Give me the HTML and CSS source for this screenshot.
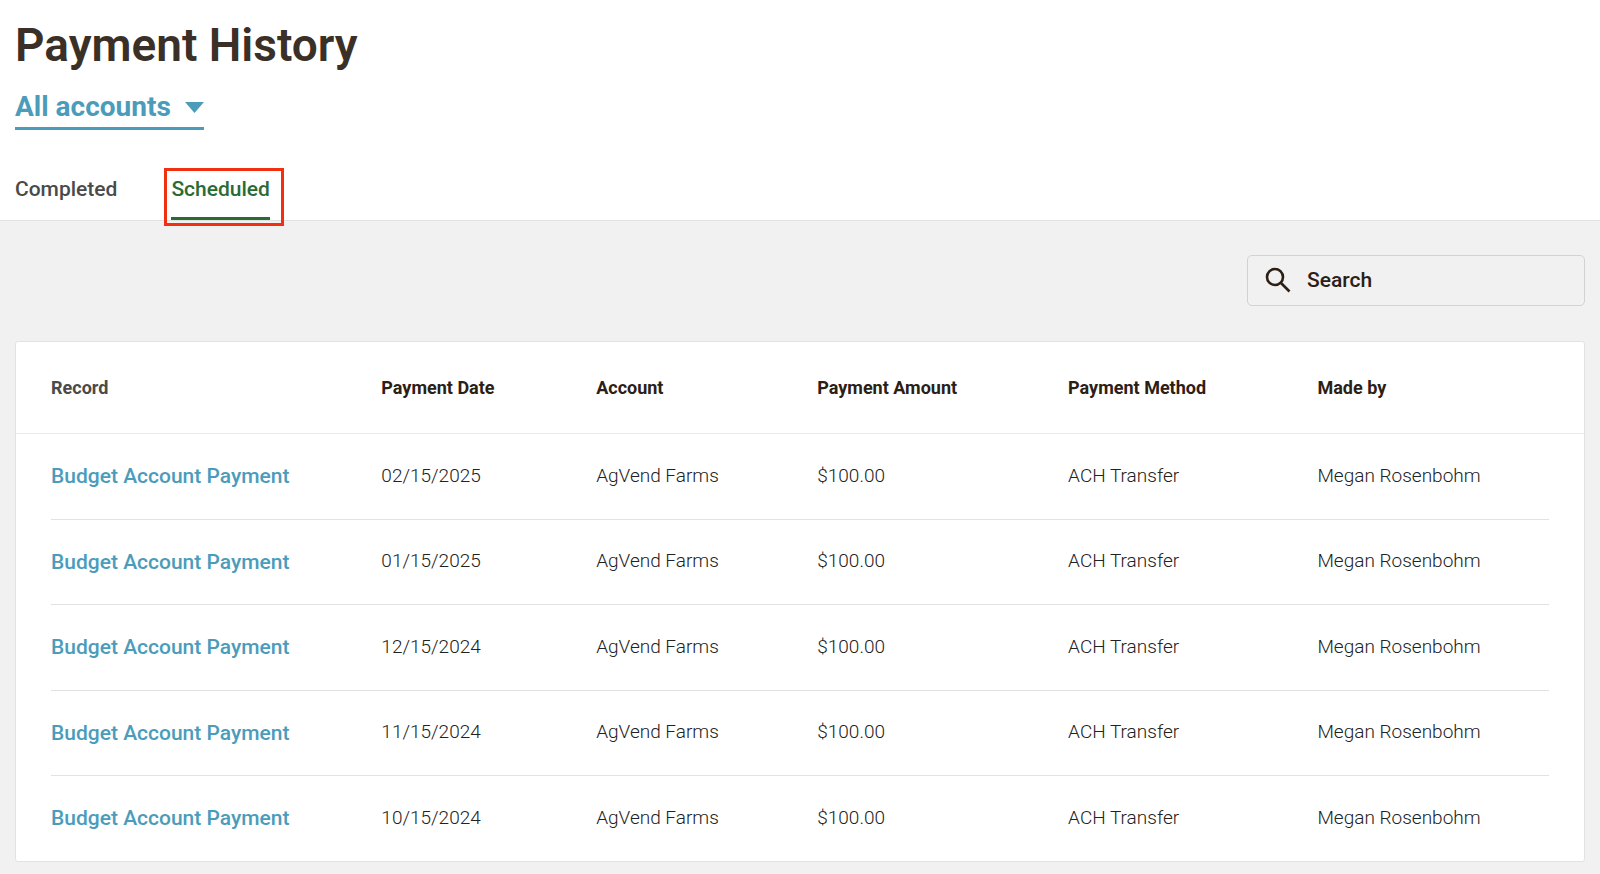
FILE: index.html
```html
<!DOCTYPE html>
<html lang="en">
<head>
  <meta charset="UTF-8" />
  <meta name="viewport" content="width=device-width, initial-scale=1.0"/>
  <title>Payment History</title>
  <link rel="stylesheet" href="styles.css">
</head>
<body>

  <header>
    <h1>Payment History</h1>
    <button type="button" class="account-picker">
      All accounts
      <svg width="19" height="11" viewBox="0 0 19 11"><path d="M0 0h19l-9.5 11z" fill="currentColor"/></svg>
    </button>
    <nav class="tabs">
      <a href="#completed">Completed</a>
      <a href="#scheduled" class="active">Scheduled</a>
    </nav>
  </header>

  <main>
    <label class="search">
      <svg width="26" height="26" viewBox="0 0 26 26" fill="none" stroke="currentColor" stroke-width="2.6">
        <circle cx="10" cy="10" r="8"/>
        <path d="M15.500 15.500L24.500 24.500"/>
      </svg>
      <input type="text" placeholder="Search" aria-label="Search">
    </label>

    <div class="card">
      <table>
        <colgroup>
          <col class="col-record">
          <col class="col-date">
          <col class="col-account">
          <col class="col-amount">
          <col class="col-method">
          <col>
        </colgroup>
        <thead>
          <tr>
            <th>Record</th>
            <th>Payment Date</th>
            <th>Account</th>
            <th>Payment Amount</th>
            <th>Payment Method</th>
            <th>Made by</th>
          </tr>
        </thead>
        <tbody>
          <tr>
            <td><a href="#">Budget Account Payment</a></td>
            <td>02/15/2025</td>
            <td>AgVend Farms</td>
            <td>$100.00</td>
            <td>ACH Transfer</td>
            <td>Megan Rosenbohm</td>
          </tr>
          <tr>
            <td><a href="#">Budget Account Payment</a></td>
            <td>01/15/2025</td>
            <td>AgVend Farms</td>
            <td>$100.00</td>
            <td>ACH Transfer</td>
            <td>Megan Rosenbohm</td>
          </tr>
          <tr>
            <td><a href="#">Budget Account Payment</a></td>
            <td>12/15/2024</td>
            <td>AgVend Farms</td>
            <td>$100.00</td>
            <td>ACH Transfer</td>
            <td>Megan Rosenbohm</td>
          </tr>
          <tr>
            <td><a href="#">Budget Account Payment</a></td>
            <td>11/15/2024</td>
            <td>AgVend Farms</td>
            <td>$100.00</td>
            <td>ACH Transfer</td>
            <td>Megan Rosenbohm</td>
          </tr>
          <tr>
            <td><a href="#">Budget Account Payment</a></td>
            <td>10/15/2024</td>
            <td>AgVend Farms</td>
            <td>$100.00</td>
            <td>ACH Transfer</td>
            <td>Megan Rosenbohm</td>
          </tr>
        </tbody>
      </table>
    </div>
  </main>

</body>
</html>
```
FILE: styles.css
```css
* {
  box-sizing: border-box;
}

body {
  font-family: Roboto, sans-serif;
  margin: 0;
  background: #f1f1f1;
  color: #4a4a4a;
}

header {
  display: flex;
  flex-direction: column;
  align-items: flex-start;
  background: #fff;
  padding: 15px 15px 0;
  border-bottom: 1px solid #e2e2e2;
}

h1 {
  margin: 0;
  font-size: 46px;
  font-weight: 600;
  line-height: 60px;
  color: #3b3027;
}

.account-picker {
  display: flex;
  align-items: center;
  gap: 14px;
  margin-top: 14px;
  padding: 0 0 2px;
  font-family: inherit;
  font-size: 28px;
  font-weight: 700;
  line-height: 36px;
  color: #4b9cbb;
  background: none;
  border: none;
  border-bottom: 3px solid #4b9cbb;
  cursor: pointer;
}

.tabs {
  display: flex;
  gap: 54px;
  margin-top: 45px;
}

.tabs a {
  position: relative;
  padding-bottom: 14px;
  font-size: 21px;
  font-weight: 500;
  line-height: 28px;
  color: #4a4a4a;
  text-decoration: none;
  border-bottom: 3px solid transparent;
}

.tabs .active {
  color: #2a6b35;
  border-bottom-color: #2a6b35;
}

/* red highlight around the selected tab */
.tabs .active::after {
  content: "";
  position: absolute;
  inset: -7px -14px -9px -7px;
  border: 3px solid #f03010;
}

main {
  padding: 34px 15px 12px;
}

.search {
  display: flex;
  align-items: center;
  gap: 16px;
  width: 338px;
  height: 51px;
  margin: 0 0 35px auto;
  padding: 0 17px 2px;
  color: #2c2015;
  border: 1px solid #d2d2d2;
  border-radius: 5px;
}

.search svg {
  flex: none;
}

.search input {
  width: 100%;
  padding: 0;
  font-family: inherit;
  font-size: 21px;
  font-weight: 500;
  color: inherit;
  background: none;
  border: none;
  outline: none;
}

.search input::placeholder {
  color: inherit;
  opacity: 1;
}

.card {
  background: #fff;
  border: 1px solid #e2e2e2;
  border-radius: 3px;
}

table {
  width: 100%;
  table-layout: fixed;
  border-collapse: collapse;
}

.col-record { width: 23.3%; }
.col-date { width: 13.7%; }
.col-account { width: 14.1%; }
.col-amount { width: 16%; }
.col-method { width: 15.9%; }

th, td {
  padding: 0;
  text-align: left;
  white-space: nowrap;
}

th:first-child, td:first-child {
  padding-left: 35px;
}

th {
  height: 91px;
  font-size: 18px;
  font-weight: 700;
  color: #2c2015;
  border-bottom: 1px solid #ebebeb;
}

th:first-child {
  color: #4a4a4a;
}

td {
  height: 85px;
  padding-bottom: 2px;
  font-size: 19px;
  font-weight: 300;
  color: #222;
}

td:first-child {
  padding-bottom: 0;
}

tr:nth-child(odd) td {
  height: 86px;
}

td a {
  font-size: 21px;
  font-weight: 500;
  color: #4b9cbb;
  text-decoration: none;
}

tbody tr {
  position: relative;
}

/* row lines stop short of the card edges */
tr + tr td:first-child::before {
  content: "";
  position: absolute;
  top: 0;
  left: 35px;
  right: 35px;
  border-top: 1px solid #e2e2e2;
}
```
